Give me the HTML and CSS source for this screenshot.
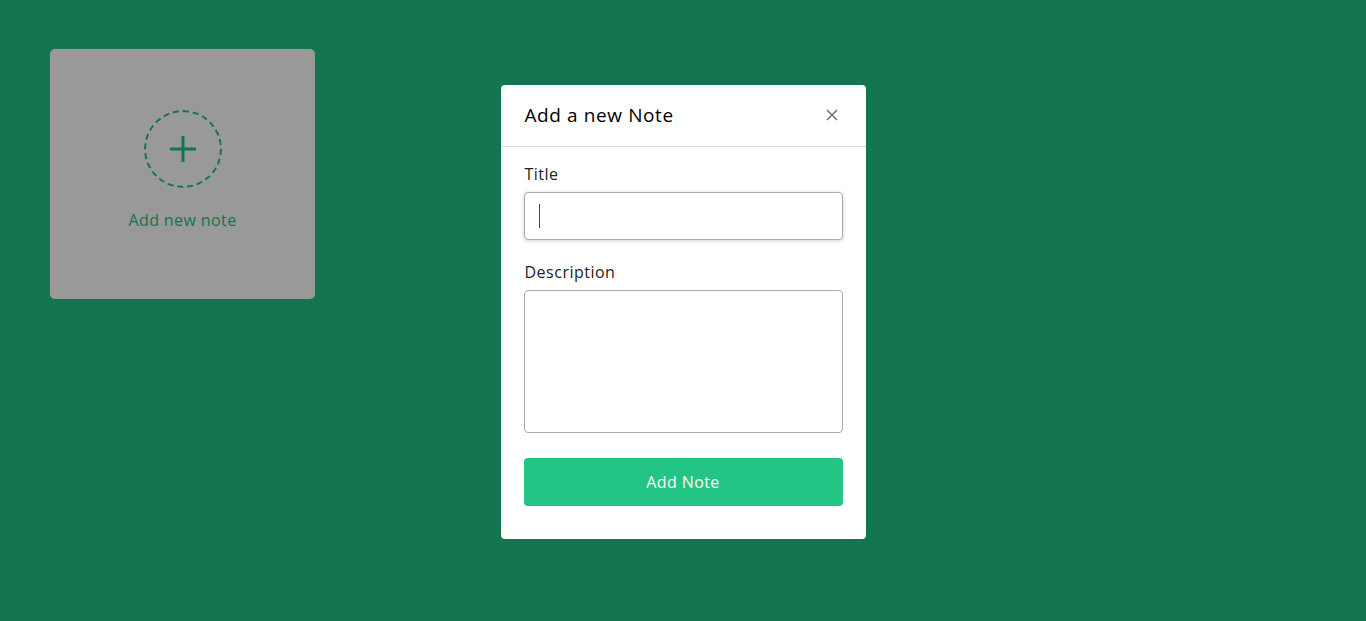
FILE: index.html
```html
<!DOCTYPE html>
<html lang="en">
<head>
<meta charset="utf-8">
<title>Notes</title>
<link rel="stylesheet" href="styles.css">
</head>
<body>
<main class="page">
  <div class="add-card">
    <div class="add-circle">
      <svg width="30" height="30" viewBox="0 0 30 30"><path d="M15 2v26M2 15h26" stroke="#22c583" stroke-width="3" fill="none"/></svg>
    </div>
    <p class="add-label">Add new note</p>
  </div>
</main>
<div class="overlay">
  <div class="modal">
    <div class="modal-header">
      <h2 class="modal-title">Add a new Note</h2>
      <button class="close-btn" aria-label="Close">
        <svg width="12" height="12" viewBox="0 0 12 12"><path d="M1 1l10 10M11 1L1 11" stroke="#777" stroke-width="1.6" fill="none"/></svg>
      </button>
    </div>
    <form class="modal-body">
      <label class="field-label">Title</label>
      <div class="input-wrap">
        <input class="text-input" type="text">
        <span class="caret"></span>
      </div>
      <label class="field-label desc-label">Description</label>
      <textarea class="text-area"></textarea>
      <button type="button" class="submit-btn">Add Note</button>
    </form>
  </div>
</div>
</body>
</html>
```
FILE: styles.css
```css
* { box-sizing: border-box; }
html, body { margin: 0; height: 100%; }
body {
  background: #22c583;
  font-family: "Open Sans", "Noto Sans", sans-serif;
  color: #000;
}
.page {
  padding: 49px 50px;
}
.add-card {
  width: 265px;
  height: 250px;
  background: #fff;
  border-radius: 5px;
  display: flex;
  flex-direction: column;
  align-items: center;
  padding-top: 61px;
}
.add-circle {
  width: 78px;
  height: 78px;
  border: 2px dashed #22c583;
  border-radius: 50%;
  display: flex;
  align-items: center;
  justify-content: center;
}
.add-label {
  margin: 20px 0 0;
  font-size: 16px;
  line-height: 24px;
  font-weight: 500;
  letter-spacing: 0.4px;
  color: #22c583;
}
.overlay {
  position: fixed;
  inset: 0;
  background: rgba(0, 0, 0, 0.4);
  display: flex;
  justify-content: center;
  align-items: flex-start;
  padding-top: 85px;
}
.modal {
  width: 365px;
  background: #fff;
  border-radius: 4px;
}
.modal-header {
  height: 62px;
  border-bottom: 1px solid #dcdcdc;
  display: flex;
  align-items: center;
  justify-content: space-between;
  padding: 0 28px 0 24px;
}
.modal-title {
  margin: 0 0 2px;
  font-size: 19px;
  font-weight: 500;
  line-height: 28px;
  letter-spacing: 0.6px;
}
.close-btn {
  border: 0;
  background: none;
  padding: 0;
  margin-bottom: 2px;
  width: 12px;
  height: 12px;
  display: flex;
}
.modal-body {
  display: flex;
  flex-direction: column;
  padding: 15px 23px 33px 23px;
}
.field-label {
  font-size: 16px;
  line-height: 24px;
  letter-spacing: 0.5px;
  color: #222;
  margin: 0 0 6px 1px;
}
.desc-label { margin-top: 20px; }
.input-wrap {
  position: relative;
}
.text-input {
  display: block;
  width: 100%;
  height: 48px;
  border: 1px solid #aaa;
  border-radius: 4px;
  box-shadow: 0 1px 4px rgba(0,0,0,0.18);
  outline: none;
  font: inherit;
  padding: 0 14px;
}
.caret {
  position: absolute;
  left: 15px;
  top: 12px;
  width: 1px;
  height: 24px;
  background: #444;
}
.text-area {
  display: block;
  width: 100%;
  height: 143px;
  border: 1px solid #aaa;
  border-radius: 4px;
  resize: none;
  font: inherit;
  outline: none;
}
.submit-btn {
  margin-top: 25px;
  height: 48px;
  border: 0;
  border-radius: 4px;
  background: #22c583;
  color: #fff;
  font: inherit;
  font-size: 16px;
  font-weight: 500;
  letter-spacing: 0.4px;
}
```
